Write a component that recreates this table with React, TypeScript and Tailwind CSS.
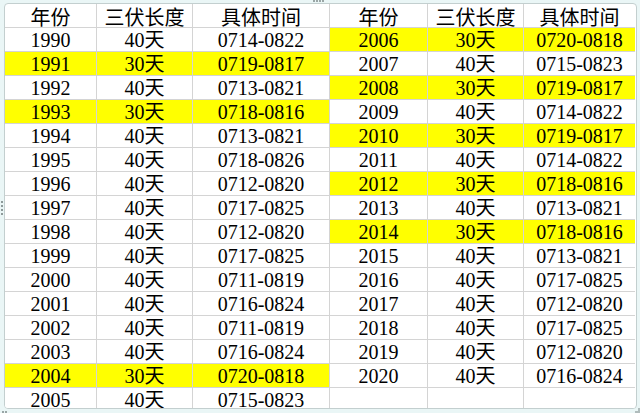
import React from "react";

type Row = { year: string; days: string; range: string; hot: boolean };

const leftRows: Row[] = [
  { year: "1990", days: "40天", range: "0714-0822", hot: false },
  { year: "1991", days: "30天", range: "0719-0817", hot: true },
  { year: "1992", days: "40天", range: "0713-0821", hot: false },
  { year: "1993", days: "30天", range: "0718-0816", hot: true },
  { year: "1994", days: "40天", range: "0713-0821", hot: false },
  { year: "1995", days: "40天", range: "0718-0826", hot: false },
  { year: "1996", days: "40天", range: "0712-0820", hot: false },
  { year: "1997", days: "40天", range: "0717-0825", hot: false },
  { year: "1998", days: "40天", range: "0712-0820", hot: false },
  { year: "1999", days: "40天", range: "0717-0825", hot: false },
  { year: "2000", days: "40天", range: "0711-0819", hot: false },
  { year: "2001", days: "40天", range: "0716-0824", hot: false },
  { year: "2002", days: "40天", range: "0711-0819", hot: false },
  { year: "2003", days: "40天", range: "0716-0824", hot: false },
  { year: "2004", days: "30天", range: "0720-0818", hot: true },
  { year: "2005", days: "40天", range: "0715-0823", hot: false },
];

const rightRows: Row[] = [
  { year: "2006", days: "30天", range: "0720-0818", hot: true },
  { year: "2007", days: "40天", range: "0715-0823", hot: false },
  { year: "2008", days: "30天", range: "0719-0817", hot: true },
  { year: "2009", days: "40天", range: "0714-0822", hot: false },
  { year: "2010", days: "30天", range: "0719-0817", hot: true },
  { year: "2011", days: "40天", range: "0714-0822", hot: false },
  { year: "2012", days: "30天", range: "0718-0816", hot: true },
  { year: "2013", days: "40天", range: "0713-0821", hot: false },
  { year: "2014", days: "30天", range: "0718-0816", hot: true },
  { year: "2015", days: "40天", range: "0713-0821", hot: false },
  { year: "2016", days: "40天", range: "0717-0825", hot: false },
  { year: "2017", days: "40天", range: "0712-0820", hot: false },
  { year: "2018", days: "40天", range: "0717-0825", hot: false },
  { year: "2019", days: "40天", range: "0712-0820", hot: false },
  { year: "2020", days: "40天", range: "0716-0824", hot: false },
  { year: "", days: "", range: "", hot: false },
];

const cell = "h-[24px] flex items-center justify-center border-b border-r border-[#d4d4d4] text-[20px] text-black";
const head = "h-[24px] flex items-center justify-center pt-[5px] border-b border-r border-[#d4d4d4] text-[20px] text-black";

export default function App() {
  return (
    <div
      className="relative w-[640px] h-[413px] bg-[#eaf6f6] pt-[3px] pl-[4px] pr-[3px] pb-[4px] overflow-hidden"
      style={{ fontFamily: '"Liberation Serif", "Noto Sans CJK SC", serif' }}
    >
      {/* sheet frame */}
      <div className="h-full border border-[#c3cfcf] rounded-[4px] bg-white overflow-hidden">
        <div className="grid grid-cols-[92px_96px_137px_98px_96px_111px]">
          <div className={head}>年份</div>
          <div className={head}>三伏长度</div>
          <div className={head}>具体时间</div>
          <div className={head}>年份</div>
          <div className={head}>三伏长度</div>
          <div className={`${head} border-r-0`}>具体时间</div>

          {leftRows.map((l, i) => {
            const r = rightRows[i];
            const lbg = l.hot ? "bg-[#ffff00]" : "bg-white";
            const rbg = r.hot ? "bg-[#ffff00]" : "bg-white";
            return (
              <React.Fragment key={l.year}>
                <div className={`${cell} ${lbg}`}>{l.year}</div>
                <div className={`${cell} ${lbg}`}>{l.days}</div>
                <div className={`${cell} ${lbg}`}>{l.range}</div>
                <div className={`${cell} ${rbg}`}>{r.year}</div>
                <div className={`${cell} ${rbg}`}>{r.days}</div>
                <div className={`${cell} ${rbg} border-r-0`}>{r.range}</div>
              </React.Fragment>
            );
          })}
        </div>
      </div>

      {/* resize handles */}
      <div className="absolute top-0 left-[313px] flex gap-[1px]">
        <span className="w-[2px] h-[2px] bg-[#9aa6a6]" />
        <span className="w-[2px] h-[2px] bg-[#9aa6a6]" />
        <span className="w-[2px] h-[2px] bg-[#9aa6a6]" />
        <span className="w-[2px] h-[2px] bg-[#9aa6a6]" />
      </div>
      <div className="absolute left-[1px] top-[201px] flex flex-col gap-[2px]">
        <span className="w-[2px] h-[2px] bg-[#8e9a9a]" />
        <span className="w-[2px] h-[2px] bg-[#8e9a9a]" />
        <span className="w-[2px] h-[2px] bg-[#8e9a9a]" />
        <span className="w-[2px] h-[2px] bg-[#8e9a9a]" />
      </div>
      <div className="absolute left-[2px] bottom-0 flex gap-[1px]">
        <span className="w-[2px] h-[2px] bg-[#9aa6a6]" />
        <span className="w-[2px] h-[2px] bg-[#9aa6a6]" />
      </div>
      <div className="absolute right-0 bottom-0 w-[5px] h-[5px] border-r-2 border-b-2 border-[#b0bcbc]" />
    </div>
  );
}
